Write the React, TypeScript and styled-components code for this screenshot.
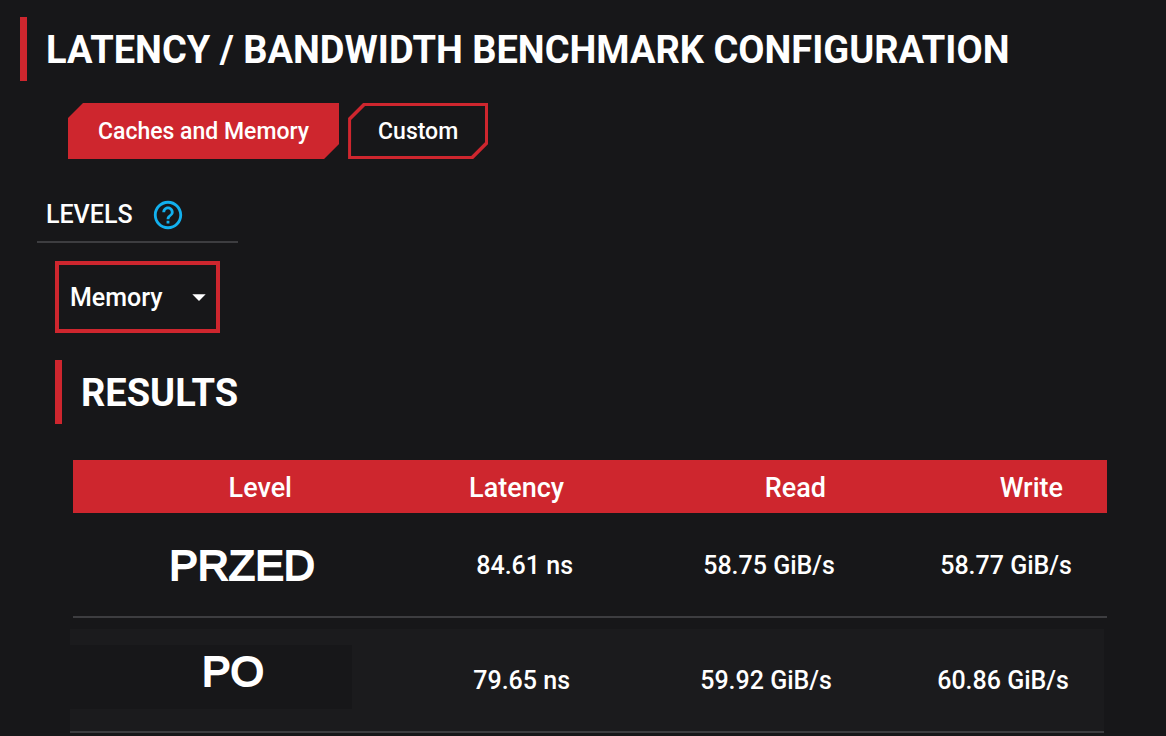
import React, { useState } from "react";
import styled, { createGlobalStyle } from "styled-components";
import { MdArrowDropDown, MdHelpOutline } from "react-icons/md";

const color = {
  page: "#171719",
  row: "#1b1b1d",
  red: "#ce262e",
  line: "#3d3d40",
  text: "#ffffff",
  help: "#12b0ee",
};

const GlobalStyle = createGlobalStyle`
  *, *::before, *::after { box-sizing: border-box; }
  body {
    margin: 0;
    background: ${color.page};
    color: ${color.text};
    font-family: Roboto, "Liberation Sans", sans-serif;
    font-size: 25px;
    font-weight: 500;
    line-height: 32px;
  }
`;

const Page = styled.main`
  padding: 17px 59px 3px 20px;
`;

const Heading = styled.h2`
  margin: 0;
  padding: 2px 0 0 19px;
  border-left: 7px solid ${color.red};
  font-size: 38px;
  font-weight: 700;
  line-height: 62px;
  white-space: nowrap;
`;

const Modes = styled.div`
  display: flex;
  gap: 9px;
  margin: 22px 0 0 48px;
`;

const cut = (n: number) =>
  `polygon(${n}px 0, 100% 0, 100% calc(100% - ${n}px), calc(100% - ${n}px) 100%, 0 100%, 0 ${n}px)`;

const ModeButton = styled.button<{ $active: boolean }>`
  position: relative;
  isolation: isolate;
  height: 56px;
  padding: 2px 30px 0;
  border: 0;
  background: ${color.red};
  color: ${color.text};
  clip-path: ${cut(15)};
  font: inherit;
  font-size: 23px;
  cursor: pointer;

  &::before {
    content: "";
    display: ${(p) => (p.$active ? "none" : "block")};
    position: absolute;
    inset: 3px;
    z-index: -1;
    background: ${color.page};
    clip-path: ${cut(14)};
  }
`;

const LevelsHeader = styled.div`
  display: flex;
  align-items: center;
  gap: 18px;
  width: 201px;
  height: 56px;
  margin: 28px 0 0 17px;
  padding: 2px 0 0 9px;
  border-bottom: 2px solid ${color.line};
`;

const HelpButton = styled.button`
  display: flex;
  padding: 0;
  border: 0;
  background: none;
  color: ${color.help};
  font-size: 34px;
  cursor: pointer;
`;

const SelectBox = styled.div`
  position: relative;
  width: 165px;
  margin: 18px 0 0 35px;

  svg {
    position: absolute;
    top: 20px;
    right: 5px;
    font-size: 32px;
    pointer-events: none;
  }
`;

const LevelSelect = styled.select`
  appearance: none;
  display: block;
  width: 100%;
  height: 72px;
  padding: 2px 40px 0 11px;
  border: 4px solid ${color.red};
  border-radius: 0;
  background: ${color.page};
  color: ${color.text};
  font: inherit;
`;

const Results = styled.section`
  margin: 27px 0 0 35px;
`;

const Table = styled.table`
  display: block;
  margin: 36px 0 0 15px;
`;

const HeadGroup = styled.thead`
  display: block;
  padding-left: 3px;
`;

const RunGroup = styled.tbody<{ $shaded?: boolean }>`
  display: block;
  padding: ${(p) => (p.$shaded ? "11px 3px 0 0" : "0 0 0 3px")};
`;

const HeadRow = styled.tr`
  display: grid;
  grid-template-columns: 263fr 272fr 262fr 237fr;
  height: 53px;
  background: ${color.red};
`;

const HeadCell = styled.th`
  padding: 12px 44px 0 0;
  font-weight: 500;
  font-size: 27px;
  text-align: right;
`;

const RunRow = styled.tr<{ $shaded?: boolean }>`
  display: grid;
  grid-template-columns: 282fr 253fr 262fr 237fr;
  align-items: center;
  height: ${(p) => (p.$shaded ? 104 : 105)}px;
  border-bottom: 2px solid ${color.line};
  background: ${(p) => (p.$shaded ? color.row : "transparent")};
`;

const RunName = styled.th<{ $inset: number; $shaded?: boolean }>`
  height: 64px;
  margin-bottom: ${(p) => (p.$shaded ? 6 : 0)}px;
  padding: 0 0 0 ${(p) => p.$inset}px;
  background: ${color.page};
  font-family: "Liberation Sans", Arial, sans-serif;
  font-size: 43px;
  font-weight: 400;
  line-height: ${(p) => (p.$shaded ? 52 : 64)}px;
  -webkit-text-stroke: 2px ${color.text};
`;

const Value = styled.td`
  padding: 2px 35px 0 0;
  text-align: right;
  white-space: nowrap;
`;

const modes = ["Caches and Memory", "Custom"];
const columns = ["Level", "Latency", "Read", "Write"];
const runs = [
  { name: "PRZED", inset: 56, values: ["84.61 ns", "58.75 GiB/s", "58.77 GiB/s"] },
  { name: "PO", inset: 44, shaded: true, values: ["79.65 ns", "59.92 GiB/s", "60.86 GiB/s"] },
];

export default function App() {
  const [mode, setMode] = useState(modes[0]);

  return (
    <>
      <GlobalStyle />
      <Page>
        <Heading as="h1">LATENCY / BANDWIDTH BENCHMARK CONFIGURATION</Heading>
        <Modes>
          {modes.map((m) => (
            <ModeButton key={m} type="button" $active={m === mode} onClick={() => setMode(m)}>
              {m}
            </ModeButton>
          ))}
        </Modes>
        <LevelsHeader>
          <label htmlFor="levels">LEVELS</label>
          <HelpButton type="button" aria-label="Help">
            <MdHelpOutline />
          </HelpButton>
        </LevelsHeader>
        <SelectBox>
          <LevelSelect id="levels">
            <option>Memory</option>
          </LevelSelect>
          <MdArrowDropDown />
        </SelectBox>
        <Results>
          <Heading>RESULTS</Heading>
          <Table>
            <HeadGroup>
              <HeadRow>
                {columns.map((c) => (
                  <HeadCell key={c} scope="col">{c}</HeadCell>
                ))}
              </HeadRow>
            </HeadGroup>
            {runs.map((r) => (
              <RunGroup key={r.name} $shaded={r.shaded}>
                <RunRow $shaded={r.shaded}>
                  <RunName scope="row" $inset={r.inset} $shaded={r.shaded}>{r.name}</RunName>
                  {r.values.map((v) => (
                    <Value key={v}>{v}</Value>
                  ))}
                </RunRow>
              </RunGroup>
            ))}
          </Table>
        </Results>
      </Page>
    </>
  );
}
